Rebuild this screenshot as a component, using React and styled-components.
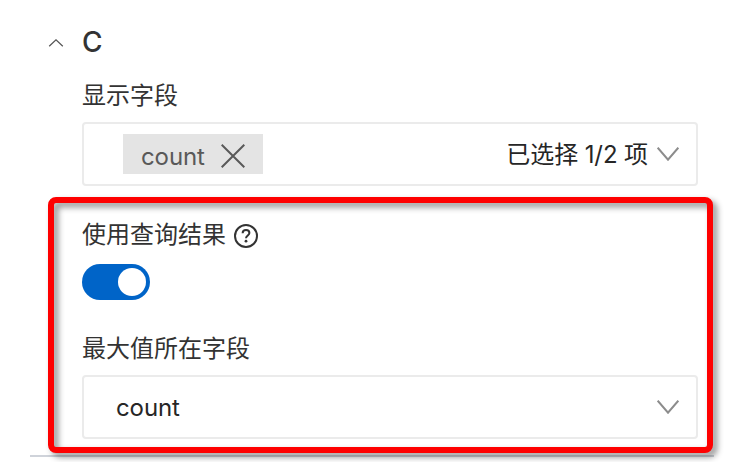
import React from "react";
import styled, { createGlobalStyle } from "styled-components";

const GlobalStyle = createGlobalStyle`
  * { box-sizing: border-box; }
  body {
    margin: 0;
    background: #fff;
    overflow: hidden;
    font-family: Inter, "Noto Sans CJK SC", sans-serif;
    font-size: 24px;
    color: #333;
  }
  svg { display: block; flex: none; }
`;

const Panel = styled.main`
  position: relative;
  width: 744px;
  height: 462px;
  padding: 24px 30px 0;
`;

const Section = styled.section`
  width: 684px;
  height: 433px;
  padding: 0 16px 0 18px;
  border-bottom: 2px solid #cfd3da;
`;

const Header = styled.header`
  display: flex;
  align-items: center;
  gap: 18px;
  height: 37px;
`;

const Title = styled.h2`
  margin: 0;
  padding-bottom: 1px;
  font-size: 28px;
  font-weight: 550;
  line-height: 36px;
`;

const Fields = styled.div`
  padding-left: 34px;
`;

const Label = styled.div`
  display: flex;
  align-items: center;
  gap: 8px;
  height: 36px;
  margin-top: ${(p) => p.$top}px;
  line-height: 36px;
  white-space: nowrap;

  svg { margin-top: 2px; }
`;

const Select = styled.div`
  display: flex;
  align-items: center;
  justify-content: space-between;
  width: 616px;
  height: 64px;
  margin-top: ${(p) => p.$top}px;
  padding: 0 17px 0 ${(p) => p.$left}px;
  border: 2px solid #ebebeb;
  border-radius: 4px;
  color: #262626;
`;

const Tag = styled.span`
  display: flex;
  align-items: center;
  justify-content: space-between;
  width: 140px;
  height: 40px;
  padding: 4px 18px 0;
  background: #e4e4e4;
  color: #595959;
  letter-spacing: -0.1px;
`;

const Summary = styled.span`
  display: flex;
  align-items: center;
  gap: 9px;
  white-space: nowrap;
`;

const Value = styled.span`
  padding-top: 2px;
  line-height: 36px;
  letter-spacing: -0.1px;
`;

const Switch = styled.button`
  display: flex;
  justify-content: flex-end;
  width: 68px;
  height: 36px;
  margin: 11px 0 0;
  padding: 4px;
  border: 0;
  border-radius: 18px;
  background: #0064c8;
`;

const Knob = styled.span`
  width: 28px;
  height: 28px;
  border-radius: 50%;
  background: #fff;
`;

const Highlight = styled.div`
  position: absolute;
  left: 48px;
  top: 197px;
  width: 665px;
  height: 256px;
  border: 6px solid #fe0000;
  border-radius: 8px;
  filter: drop-shadow(4px 4px 3px rgba(0, 0, 0, 0.45));
  pointer-events: none;
`;

const Down = () => (
  <svg width="22" height="14" viewBox="0 0 22 14" fill="none" stroke="#8c8c8c" strokeWidth="2">
    <path d="M.7.7 11 12.7 21.3.7" />
  </svg>
);

const Up = () => (
  <svg width="16" height="8" viewBox="0 0 16 8" fill="none" stroke="#555" strokeWidth="1.2">
    <path d="M1.2 7.3 8 .8l6.8 6.5" />
  </svg>
);

const Close = () => (
  <svg width="24" height="24" viewBox="0 0 24 24" fill="none" stroke="#595959" strokeWidth="2">
    <path d="m.7.7 22.6 22.6M23.3.7.7 23.3" />
  </svg>
);

const Help = () => (
  <svg width="24" height="24" viewBox="0 0 24 24" fill="none" stroke="#333" strokeWidth="2">
    <circle cx="12" cy="12" r="11" />
    <path d="M8.6 9.3c.1-2 1.5-3.2 3.4-3.2s3.4 1.2 3.4 2.9c0 2.3-3.4 2.6-3.4 5.2" />
    <circle cx="12" cy="17.2" r="1.4" fill="#333" stroke="none" />
  </svg>
);

export default function App() {
  return (
    <>
      <GlobalStyle />
      <Panel>
        <Section>
          <Header>
            <Up />
            <Title>C</Title>
          </Header>
          <Fields>
            <Label $top={17}>显示字段</Label>
            <Select $top={8} $left={39}>
              <Tag>
                count
                <Close />
              </Tag>
              <Summary>
                <Value>已选择 1/2 项</Value>
                <Down />
              </Summary>
            </Select>
            <Label $top={31}>
              使用查询结果
              <Help />
            </Label>
            <Switch type="button" role="switch" aria-checked="true" aria-label="使用查询结果">
              <Knob />
            </Switch>
            <Label $top={31}>最大值所在字段</Label>
            <Select $top={8} $left={32}>
              <Value>count</Value>
              <Down />
            </Select>
          </Fields>
        </Section>
        <Highlight />
      </Panel>
    </>
  );
}
